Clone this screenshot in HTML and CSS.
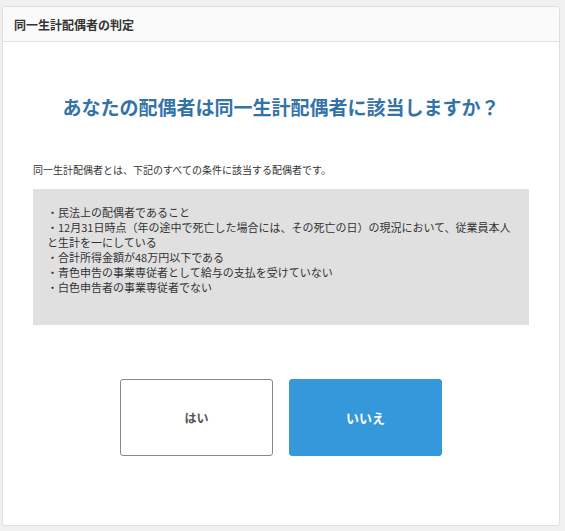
FILE: index.html
```html
<!DOCTYPE html>
<html lang="ja">
<head>
<meta charset="utf-8">
<title>同一生計配偶者の判定</title>
<link rel="stylesheet" href="styles.css">
</head>
<body>
<div class="page">
  <div class="card">
    <div class="card-header">同一生計配偶者の判定</div>
    <div class="card-body">
      <h1 class="question">あなたの配偶者は同一生計配偶者に該当しますか？</h1>
      <p class="lead">同一生計配偶者とは、下記のすべての条件に該当する配偶者です。</p>
      <div class="conditions">
        <p>・民法上の配偶者であること</p>
        <p>・12月31日時点（年の途中で死亡した場合には、その死亡の日）の現況において、従業員本人と生計を一にしている</p>
        <p>・合計所得金額が48万円以下である</p>
        <p>・青色申告の事業専従者として給与の支払を受けていない</p>
        <p>・白色申告者の事業専従者でない</p>
      </div>
      <div class="actions">
        <button class="btn btn-yes">はい</button>
        <button class="btn btn-no">いいえ</button>
      </div>
    </div>
  </div>
</div>
</body>
</html>
```

FILE: styles.css
```css
html, body {
  margin: 0;
  padding: 0;
  background: #f0f0f0;
  font-family: "Noto Sans CJK JP", "Noto Sans", sans-serif;
  color: #333;
}
.page {
  padding: 6px 5px 5px 2px;
  height: 531px;
  box-sizing: border-box;
}
.card {
  height: 100%;
  box-sizing: border-box;
  background: #fff;
  border: 1px solid #e0e0e0;
  border-radius: 3px;
  display: flex;
  flex-direction: column;
}
.card-header {
  height: 34px;
  border-bottom: 1px solid #e0e0e0;
  background: #fafafa;
  border-radius: 3px 3px 0 0;
  padding-left: 11px;
  display: flex;
  align-items: center;
  font-size: 12px;
  font-weight: 700;
  color: #333;
}
.card-body {
  padding: 51px 30px 0;
}
.question {
  margin: 0;
  text-align: center;
  font-size: 19px;
  line-height: 28px;
  font-weight: 700;
  color: #3473a7;
}
.lead {
  margin: 41px 0 0;
  font-size: 10px;
  line-height: 15px;
}
.conditions {
  margin-top: 12px;
  background: #e0e0e0;
  padding: 16px 12px 30px 14px;
  height: 136px;
  box-sizing: border-box;
}
.conditions p {
  margin: 0;
  font-size: 11px;
  line-height: 15px;
}
.actions {
  margin-top: 54px;
  display: flex;
  justify-content: center;
  gap: 16px;
}
.btn {
  width: 153px;
  height: 77px;
  border-radius: 3px;
  font-family: inherit;
  font-size: 12px;
  font-weight: 700;
  cursor: pointer;
}
.btn-yes {
  background: #fff;
  border: 1px solid #888;
  color: #555;
}
.btn-no {
  background: #3498db;
  border: 1px solid #3498db;
  color: #fff;
  font-size: 13px;
}
```
